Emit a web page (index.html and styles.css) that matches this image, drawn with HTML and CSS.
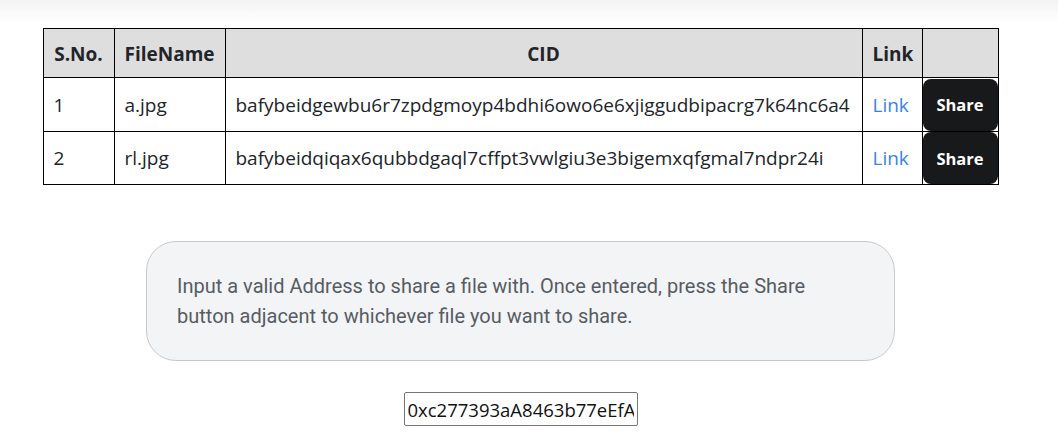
FILE: index.html
```html
<!DOCTYPE html>
<html lang="en">
<head>
<meta charset="utf-8">
<title>Files</title>
<link rel="stylesheet" href="styles.css">
</head>
<body>
<div class="topshade"></div>
<main class="page">
  <table class="files">
    <colgroup>
      <col class="c-sno"><col class="c-name"><col class="c-cid"><col class="c-link"><col class="c-share">
    </colgroup>
    <thead>
      <tr><th>S.No.</th><th>FileName</th><th>CID</th><th>Link</th><th></th></tr>
    </thead>
    <tbody>
      <tr class="r1">
        <td>1</td><td>a.jpg</td><td>bafybeidgewbu6r7zpdgmoyp4bdhi6owo6e6xjiggudbipacrg7k64nc6a4</td>
        <td><a class="link" href="#">Link</a></td>
        <td class="btncell"><button class="share">Share</button></td>
      </tr>
      <tr class="r2">
        <td>2</td><td>rl.jpg</td><td>bafybeidqiqax6qubbdgaql7cffpt3vwlgiu3e3bigemxqfgmal7ndpr24i</td>
        <td><a class="link" href="#">Link</a></td>
        <td class="btncell"><button class="share">Share</button></td>
      </tr>
    </tbody>
  </table>

  <div class="info">Input a valid Address to share a file with. Once entered, press the Share button adjacent to whichever file you want to share.</div>

  <input class="addr" type="text" value="0xc277393aA8463b77eEfA0c0f1d5a7e0a9cB2e3d4">
</main>
</body>
</html>
```
FILE: styles.css
```css
html, body {
  margin: 0;
  padding: 0;
  background: #ffffff;
}
body {
  font-family: "Open Sans", "Noto Sans", sans-serif;
  color: #212529;
  position: relative;
}
.topshade {
  height: 24px;
  margin-bottom: -24px;
  background: linear-gradient(to bottom, #f2f2f2 0%, #fafafa 50%, #ffffff 100%);
}
.page {
  width: 1041px;
  padding-top: 28px;
  display: flex;
  flex-direction: column;
  align-items: center;
  position: relative;
}
.files {
  border-collapse: collapse;
  table-layout: fixed;
  width: 956px;
  font-size: 19px;
}
.c-sno { width: 71px; }
.c-name { width: 111px; }
.c-cid { width: 637px; }
.c-link { width: 60px; }
.c-share { width: 76px; }
.files th, .files td {
  border: 1px solid #000;
  padding: 0 10px;
  white-space: nowrap;
  overflow: hidden;
}
.files th {
  background: #dedede;
  font-weight: 700;
  font-size: 19px;
  height: 46px;
  padding-top: 2px;
  text-align: center;
}
.files td {
  text-align: left;
}
.r1 td { height: 53px; }
.r2 td { height: 52px; }
.link {
  color: #3a82e6;
  text-decoration: none;
}
.files td.btncell {
  padding: 0;
}
.share {
  display: block;
  width: 100%;
  height: 52px;
  border: 0;
  border-radius: 8px;
  background: #17191b;
  color: #ffffff;
  font-family: "Open Sans", "Noto Sans", sans-serif;
  font-weight: 700;
  font-size: 16.5px;
  cursor: pointer;
}
.info {
  box-sizing: border-box;
  width: 749px;
  margin-top: 56px;
  padding: 29px 30px;
  border: 1px solid #c8c9cb;
  border-radius: 30px;
  background: #f3f4f6;
  color: #575c63;
  font-family: "Roboto", sans-serif;
  font-size: 20px;
  line-height: 30px;
}
.addr {
  box-sizing: border-box;
  width: 234px;
  height: 34px;
  margin-top: 31px;
  padding: 0 3px;
  border: 1px solid #767676;
  border-radius: 2px;
  font-family: "Open Sans", "Noto Sans", sans-serif;
  font-size: 18.5px;
  color: #111;
}
```
